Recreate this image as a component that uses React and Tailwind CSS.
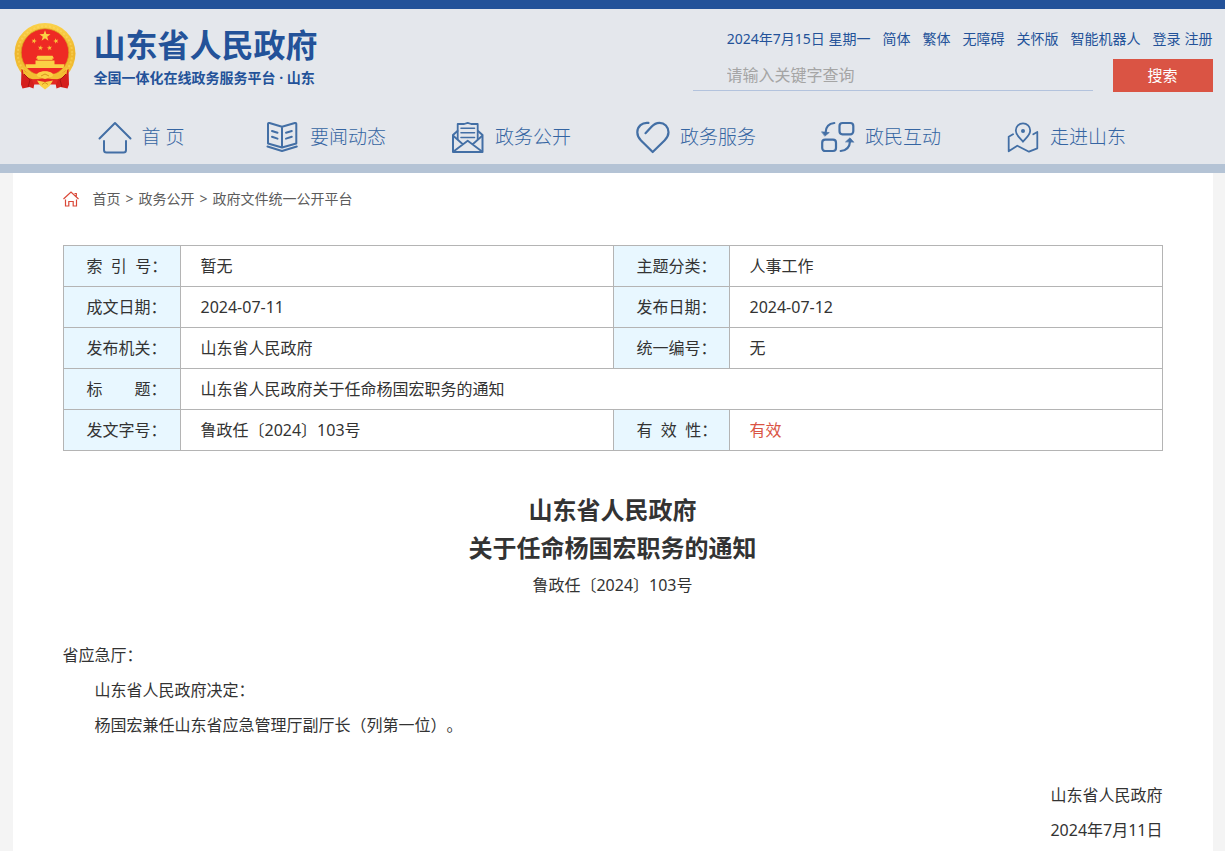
const star = (cx, cy, r, turn = 0) =>
  Array.from({ length: 10 }, (_, i) => {
    const a = (Math.PI / 5) * i - Math.PI / 2 + turn;
    const d = i % 2 ? r * 0.4 : r;
    return `${(cx + d * Math.cos(a)).toFixed(2)},${(cy + d * Math.sin(a)).toFixed(2)}`;
  }).join(" ");

function Emblem() {
  return (
    <svg viewBox="0 0 62 68" className="h-[68px] w-[62px] shrink-0" aria-hidden="true">
      <defs>
        <linearGradient id="gold" x1="0" y1="0" x2="0" y2="1">
          <stop offset="0" stopColor="#fbd24b" />
          <stop offset="0.5" stopColor="#eeb62c" />
          <stop offset="1" stopColor="#f7c93c" />
        </linearGradient>
      </defs>
      <circle cx="31" cy="31.5" r="30.5" fill="url(#gold)" />
      <circle cx="31" cy="31.5" r="27.2" fill="none" stroke="#ffdc66" strokeWidth="2" strokeDasharray="2 2" opacity="0.5" />
      <path d="M7.500 47c5 2 9 8 17 9.500l-4 4.500-1 5.500-4-1.500-7 1.500-1.500-4z" fill="#d51f1c" />
      <path d="M54.500 47c-5 2-9 8-17 9.500l4 4.500 1 5.500 4-1.500 7 1.500 1.500-4z" fill="#d51f1c" />
      <circle cx="31" cy="30.500" r="23.800" fill="#ee2a24" stroke="#d99a1e" strokeWidth="0.8" />
      <polygon points={star(31, 14, 5.8)} fill="#fbd045" />
      <polygon points={star(20, 19, 2.8, 0.3)} fill="#f9c23a" />
      <polygon points={star(42, 19, 2.8, -0.3)} fill="#f9c23a" />
      <polygon points={star(26.5, 26, 2.8, 0.2)} fill="#f9c23a" />
      <polygon points={star(35.500, 26, 2.8, -0.2)} fill="#f9c23a" />
      <path d="M23.500 33.800h15l1.500 2.700H22zM23.500 36.500h15V38h-15zM21.500 38.500h19v3.800h-19zM11.500 42.300h39l-1 3.700h-37z" fill="#fbd045" />
      <path d="M23 38.200h16" stroke="#e08a22" strokeWidth="0.700" />
      <path d="M8.500 46.500c4 5 9 5.500 16 5.300 3-3 10-3 13 0 7 .2 12-.3 16-5.300l-1 5.500c-4 4.500-9 6-15 5.500H24.500c-6 .5-11-1-15-5.500z" fill="#f3bd31" />
      <path d="M18 58c8-2 18-2 26 0l-2 4.500H20z" fill="#e32822" />
      <path d="M24 51c3-2.500 11-2.500 14 0 2 2 1 4-2 4l-5 2-5-2c-3 0-4-2-2-4z" fill="#fbd045" />
      <path d="M23 58.500l8 1.500 8-1.500-3.500 5.500-4.500 3.500-4.500-3.500z" fill="#fbcf43" />
      <path d="M10 52l6 6-2 7M52 52l-6 6 2 7" stroke="#a91512" strokeWidth="1" fill="none" />
      <path d="M27 54l4-2 4 2M28 62.500l3-2 3 2" stroke="#d38f1a" strokeWidth="0.9" fill="none" />
    </svg>
  );
}

const navItems = [
  {
    label: "首 页",
    icon: (
      <>
        <path d="M1.500 18.500 17 3l15.500 15.500" />
        <path d="M6 21v9q0 2.500 2.500 2.500h17q2.500 0 2.500-2.500v-9" />
      </>
    ),
  },
  {
    label: "要闻动态",
    icon: (
      <>
        <path d="M16 6.700 3.500 3Q2 2.700 2 4v19.500l14 4 14.300-4V4q0-1.300-1.500-1L16 6.700v20.800" />
        <path d="M1.500 26.500 16 31l14.800-4.500M6 11l5.500 1.800M6 16.800l5.500 1.800M20 12.800l5.800-1.800M20 18.600l5.800-1.800" />
      </>
    ),
  },
  {
    label: "政务公开",
    icon: (
      <>
        <path d="M6.500 11 2 15v17h29.500V15l-4.500-4" />
        <path d="M6.700 19V4h6.500l3.500-1.200L20.200 4h6.500v15" strokeWidth="1.800" />
        <path d="M10 8.300h13.500M10 12.800h13.500M10 17.500h13.500" strokeWidth="1.600" />
        <path d="m2.500 16 9.300 8.200M31 16l-9.300 8.200M2.500 31.500l14.200-10.800L31 31.500" strokeWidth="1.800" />
      </>
    ),
  },
  {
    label: "政务服务",
    icon: (
      <path d="M12.500 2.900C6 2 1.300 6.500 1.300 12.300c0 3.700 1.700 6.200 3.700 8.200L16.700 32l11.800-11.500c2.500-2.500 4-5 4-8.200 0-5.300-4-9.500-9-9.500-3.500 0-6 1.700-8 3.900l-6 6.500" strokeWidth="2.200" />
    ),
  },
  {
    label: "政民互动",
    icon: (
      <>
        <rect x="18.500" y="3" width="13.800" height="11.300" rx="3" strokeWidth="2.200" />
        <rect x="1.200" y="19.700" width="13.800" height="11.300" rx="3" strokeWidth="2.200" />
        <path d="M13.300 3C8 3.500 4.800 7 4.600 12.500M19.700 31c5.500-.5 9-4 9.300-9.500" strokeWidth="2.200" />
        <path d="M.8 11.800 8.300 12.600 4 16zM24.700 21.700 29 17.800l3.700 4.200z" fill="currentColor" strokeWidth="0.600" />
      </>
    ),
  },
  {
    label: "走进山东",
    icon: (
      <>
        <path d="M17 21.700c-3-3.500-7.200-6.700-7.200-11.200a7.200 7.200 0 0 1 14.400 0c0 4.500-4.200 7.700-7.200 11.200z" strokeWidth="1.800" />
        <circle cx="17" cy="11" r="2" fill="currentColor" stroke="none" />
        <path d="m7 14.300-4.300 2.400v14.600l8.600-5.600L23 31.700l8.300-3.400V12l-4 2.200" strokeWidth="1.800" />
      </>
    ),
  },
];

const links = ["简体", "繁体", "无障碍", "关怀版", "智能机器人"];

const rows = [
  ["索\u00a0\u00a0引\u00a0\u00a0号：", "暂无", "主题分类：", "人事工作"],
  ["成文日期：", "2024-07-11", "发布日期：", "2024-07-12"],
  ["发布机关：", "山东省人民政府", "统一编号：", "无"],
  ["标\u3000\u3000题：", "山东省人民政府关于任命杨国宏职务的通知"],
  ["发文字号：", "鲁政任〔2024〕103号", "有\u00a0\u00a0效\u00a0\u00a0性：", "有效"],
];

const labelCell = "border border-[#b4b4b4] bg-[#e8f7ff] pl-[23px] text-left font-normal whitespace-nowrap";
const valueCell = "border border-[#b4b4b4] px-5";

export default function App() {
  return (
    <div
      lang="zh-CN"
      className="flex min-h-screen flex-col bg-[#f4f4f4] font-['Noto_Sans','Noto_Sans_CJK_SC',sans-serif] text-base text-[#333] [text-spacing-trim:space-all]"
    >
      <header className="border-t-[9px] border-b-[9px] border-t-[#235299] border-b-[#b4c3d5] bg-[#e4e7ec]">
        <div className="mx-auto max-w-[1200px]">
          <div className="flex h-[101px] justify-between">
            <a href="#" className="flex items-start gap-[18px] pt-[13px] pl-px text-[#235299]">
              <Emblem />
              <span className="flex flex-col font-['Noto_Sans_CJK_SC',sans-serif] font-bold whitespace-nowrap">
                <span className="text-[32px] leading-[42px]">山东省人民政府</span>
                <span className="text-sm leading-[26px]">
                  全国一体化在线政务服务平台<span className="font-['Noto_Sans']"> · </span>山东
                </span>
              </span>
            </a>
            <div className="flex flex-col items-end">
              <div className="flex gap-3 pt-5 text-sm leading-5 whitespace-nowrap text-[#235299]">
                <span>2024年7月15日 星期一</span>
                {links.map((l) => (
                  <a key={l} href="#">{l}</a>
                ))}
                <span className="flex gap-1">
                  <a href="#">登录</a>
                  <a href="#">注册</a>
                </span>
              </div>
              <form className="mt-[10px] flex gap-5" onSubmit={(e) => e.preventDefault()}>
                <input
                  type="text"
                  aria-label="请输入关键字查询"
                  placeholder="请输入关键字查询"
                  className="h-8 w-[400px] border-b border-[#b3c3dd] bg-transparent pl-[34px] outline-none placeholder:text-[#a5a5a5]"
                />
                <button type="submit" className="h-[33px] w-[100px] bg-[#da5444] text-[15px] text-white">
                  搜索
                </button>
              </form>
            </div>
          </div>
          <nav className="grid h-[54px] grid-cols-6 pr-[54px] pl-9">
            {navItems.map((item) => (
              <a
                key={item.label}
                href="#"
                className="flex items-center justify-center gap-[10px] text-[19px] font-light whitespace-nowrap text-[#3565a2]"
              >
                <svg
                  viewBox="0 0 34 34"
                  className="size-[34px] shrink-0 text-[#436fa5]"
                  fill="none"
                  stroke="currentColor"
                  strokeWidth="2"
                  strokeLinecap="round"
                  strokeLinejoin="round"
                  aria-hidden="true"
                >
                  {item.icon}
                </svg>
                {item.label}
              </a>
            ))}
          </nav>
        </div>
      </header>

      <main className="mx-auto w-full max-w-[1200px] grow bg-white px-[50px]">
        <div className="flex items-center gap-[14px] pt-4 text-sm leading-5 text-[#5c5c5c]">
          <svg viewBox="0 0 16 16" className="size-4 shrink-0" fill="none" stroke="#da4838" strokeWidth="1.200" aria-hidden="true">
            <path d="M.5 8 8 1l7.500 7M11.500 2.500h1.800V6M2.500 8.500V15h3.300v-4.500h4.400V15h3.300V8.500" />
          </svg>
          <div className="flex gap-[5px]">
            <a href="#">首页</a>
            <span>&gt;</span>
            <a href="#">政务公开</a>
            <span>&gt;</span>
            <a href="#">政府文件统一公开平台</a>
          </div>
        </div>

        <table className="mt-9 w-full table-fixed border-collapse">
          <colgroup>
            <col className="w-[117px]" />
            <col />
            <col className="w-[116px]" />
            <col />
          </colgroup>
          <tbody>
            {rows.map((r) => (
              <tr key={r[0]} className="h-[41px]">
                <th scope="row" className={labelCell}>{r[0]}</th>
                <td colSpan={r.length === 2 ? 3 : 1} className={valueCell}>{r[1]}</td>
                {r.length > 2 && <th scope="row" className={labelCell}>{r[2]}</th>}
                {r.length > 2 && (
                  <td className={r[3] === "有效" ? `${valueCell} text-[#da5444]` : valueCell}>{r[3]}</td>
                )}
              </tr>
            ))}
          </tbody>
        </table>

        <article className="pt-10 pb-8 leading-[35px]">
          <h1 className="pb-px text-center text-2xl leading-[38px] font-bold">
            山东省人民政府
            <br />
            关于任命杨国宏职务的通知
          </h1>
          <p className="text-center">鲁政任〔2024〕103号</p>
          <p className="mt-[35px]">省应急厅：</p>
          <p className="indent-8">山东省人民政府决定：</p>
          <p className="indent-8">杨国宏兼任山东省应急管理厅副厅长（列第一位）。</p>
          <p className="mt-[35px] text-right">山东省人民政府</p>
          <p className="text-right">2024年7月11日</p>
        </article>
      </main>
    </div>
  );
}
